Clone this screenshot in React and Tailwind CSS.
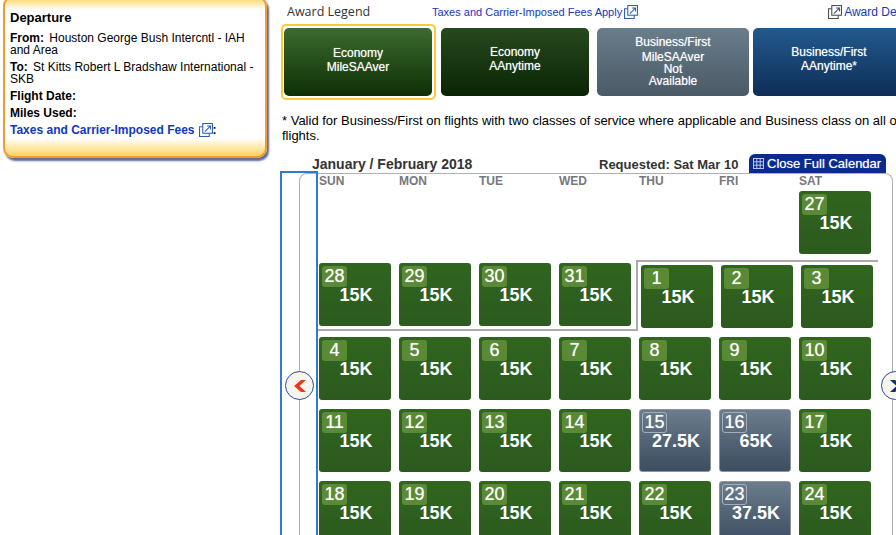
// Award calendar page: trip summary on the left, legend and month grid on the right
const ExternalIcon = ({ className = 'text-[#2f5fb8]' }) => (
  <svg width="14" height="14" viewBox="0 0 13 13" fill="none" stroke="currentColor" strokeWidth="1" className={className}>
    <path d="M3.5 3.5H0.5V12.5H9.5V9.5" />
    <rect x="3.5" y="0.5" width="9" height="9" />
    <path d="M5.5 8L10.5 3M7.5 2.8H10.7V6" />
  </svg>
);

const CalendarIcon = () => (
  <svg width="11" height="11" viewBox="0 0 11 11" fill="none" stroke="#b9c4ea" strokeWidth="1" className="shrink-0">
    <rect x="0.5" y="0.5" width="10" height="10" />
    <path d="M3.8 0.5V10.5M7.2 0.5V10.5M0.5 3.8H10.5M0.5 7.2H10.5" />
  </svg>
);

const NavButton = ({ className, color, d }) => (
  <button className={`absolute flex h-[29px] w-[29px] items-center justify-center rounded-full border border-[#2b4a9c] bg-[#f8f6ec] ${className}`}>
    <svg width="14" height="14" viewBox="0 0 14 14">
      <path d={d} fill={color} />
    </svg>
  </button>
);

const legend = [
  { lines: ['Economy', 'MileSAAver'], className: 'w-[148px] pb-[4px] bg-gradient-to-b from-[#3d6c2f] to-[#0e2f06]' },
  { lines: ['Economy', 'AAnytime'], className: 'ml-[5px] w-[148px] pb-[6px] bg-gradient-to-b from-[#28491f] to-[#0a2505]' },
  { lines: ['Business/First', 'MileSAAver', 'Not', 'Available'], tight: true, className: 'ml-[8px] w-[152px] pb-[2px] bg-gradient-to-b from-[#6a7d8b] to-[#4a5a66]' },
  { lines: ['Business/First', 'AAnytime*'], className: 'ml-[4px] w-[152px] shrink-0 pb-[6px] bg-gradient-to-b from-[#235a8e] to-[#0e2e57]' },
];

const days = ['SUN', 'MON', 'TUE', 'WED', 'THU', 'FRI', 'SAT'];

// null = empty slot, f = February cell of the shifted row, gray = business fare
const cells = [
  null, null, null, null, null, null, { d: 27, m: '15K' },
  { d: 28, m: '15K' }, { d: 29, m: '15K' }, { d: 30, m: '15K' }, { d: 31, m: '15K' },
  { d: 1, m: '15K', f: true }, { d: 2, m: '15K', f: true }, { d: 3, m: '15K', f: true },
  { d: 4, m: '15K' }, { d: 5, m: '15K' }, { d: 6, m: '15K' }, { d: 7, m: '15K' }, { d: 8, m: '15K' }, { d: 9, m: '15K' }, { d: 10, m: '15K' },
  { d: 11, m: '15K' }, { d: 12, m: '15K' }, { d: 13, m: '15K' }, { d: 14, m: '15K' },
  { d: 15, m: '27.5K', gray: true }, { d: 16, m: '65K', gray: true }, { d: 17, m: '15K' },
  { d: 18, m: '15K' }, { d: 19, m: '15K' }, { d: 20, m: '15K' }, { d: 21, m: '15K' }, { d: 22, m: '15K' },
  { d: 23, m: '37.5K', gray: true }, { d: 24, m: '15K' },
];

const DayCell = ({ cell }) => {
  if (!cell) return <div className="h-[63px] w-[72px]"></div>;
  return (
    <div
      className={`flex h-[63px] w-[72px] flex-col rounded-[3px] text-white ${cell.f ? 'ml-[2px] mt-[2px]' : ''} ${
        cell.gray
          ? 'border border-[#8b949c] bg-gradient-to-b from-[#6b7d8c] to-[#3d4d62] pl-[2px] pt-[2px]'
          : 'bg-gradient-to-b from-[#30651f] to-[#2c5a1e] pl-[3px] pt-[3px]'
      }`}>
      <div
        className={`flex h-[21px] w-[25px] items-center justify-center rounded-[3px] pb-[1px] text-[18px] leading-none [text-shadow:0_0_1px_rgba(255,255,255,0.6)] ${
          cell.gray ? 'border border-[#a4aeb8]' : 'bg-[#5a8a36]'
        }`}>
        {cell.d}
      </div>
      <div className={`-mt-[2px] text-center text-[18px] font-bold leading-[20px] ${cell.gray ? '-ml-[2px] pl-[2px]' : '-ml-[3px] pl-[2px]'}`}>{cell.m}</div>
    </div>
  );
};

export default function App() {
  return (
    <div className="relative flex h-[535px] w-[896px] overflow-hidden bg-white font-['Liberation_Sans',Arial,sans-serif] text-black">
      {/* Resumen del viaje */}
      <aside className="w-[280px] shrink-0 pl-[3px]">
        <div className="-mt-[4px] h-[162px] w-[264px] rounded-[10px] border-2 border-[#f29b30] bg-[linear-gradient(to_bottom,#ffd666_0,#ffffff_12px,#ffffff_calc(100%-18px),#ffd45e_100%)] pl-[5px] pr-[2px] pt-[13px] text-[12px] leading-[12px] shadow-[2px_3px_2px_#5f6d94]">
          <div className="mb-[7px] text-[13px] font-bold leading-[14px]">Departure</div>
          <div className="mb-[5px]">
            <b className="mr-[2px]">From:</b> Houston George Bush Intercntl - IAH and Area
          </div>
          <div className="mb-[5px]">
            <b className="mr-[2px]">To:</b> St Kitts Robert L Bradshaw International - SKB
          </div>
          <div className="mb-[5px] font-bold">Flight Date:</div>
          <div className="mb-[5px] font-bold">Miles Used:</div>
          <div className="flex h-[12px] items-center font-bold text-[#1238bd]">
            Taxes and Carrier-Imposed Fees
            <span className="ml-[4px]">
              <ExternalIcon />
            </span>
            <span className="text-black">:</span>
          </div>
        </div>
      </aside>

      <main className="w-[616px] shrink-0">
        {/* Leyenda */}
        <div className="flex h-[24px] w-[660px] items-center">
          <span className="ml-[7px] w-[145px] shrink-0 font-['Open_Sans',sans-serif] text-[12.5px] text-[#333]">Award Legend</span>
          <span className="flex shrink-0 items-center whitespace-nowrap text-[11px] text-[#1238bd]">
            Taxes and Carrier-Imposed Fees Apply
            <span className="ml-[2px]">
              <ExternalIcon />
            </span>
          </span>
          <span className="ml-[190px] flex shrink-0 items-center whitespace-nowrap text-[12px] text-[#1238bd]">
            <span className="mr-[2px]">
              <ExternalIcon className="text-[#4a4f58]" />
            </span>
            Award Details
          </span>
        </div>

        <div className="flex w-[640px] items-center pl-[1px]">
          <div className="shrink-0 rounded-[5px] border-2 border-[#fbc93c] py-[2px] pl-[1px] pr-[2px]">
            <LegendButton item={legend[0]} />
          </div>
          {legend.slice(1).map(item => (
            <LegendButton key={item.lines.join()} item={item} />
          ))}
        </div>

        <p className="mt-[13px] w-[640px] pl-[2px] text-[13px] leading-[15px]">
          * Valid for Business/First on flights with two classes of service where applicable and Business class on all other flights.
        </p>

        {/* Cabecera del calendario */}
        <div className="mt-[11px] flex h-[19px] items-end pl-[32px] pr-[10px]">
          <span className="mb-[1px] w-[287px] shrink-0 text-[14px] font-bold leading-[16px] text-[#333]">January / February 2018</span>
          <span className="mb-[1px] w-[150px] shrink-0 whitespace-nowrap text-[13px] font-bold leading-[15px] text-[#333]">Requested: Sat Mar 10</span>
          <button className="flex h-[19px] w-[137px] shrink-0 items-center gap-[3px] rounded-t-[6px] bg-[#0a2a8e] pl-[4px] text-[13px] leading-none text-white [text-shadow:0_0_1px_rgba(255,255,255,0.6)]">
            <CalendarIcon />
            <span className="whitespace-nowrap">Close Full Calendar</span>
          </button>
        </div>

        {/* Cuadrícula del mes */}
        <div className="relative ml-[19px] h-[400px] w-[594px] rounded-t-[8px] border border-b-0 border-[#b0b0b0] pl-[19px]">
          <div className="grid grid-cols-[repeat(7,72px)] gap-x-[8px]">
            {days.map(day => (
              <div key={day} className="h-[17px] text-[12px] font-bold leading-[14px] text-[#77777f]">
                {day}
              </div>
            ))}
          </div>
          <div className="relative grid grid-cols-[repeat(7,72px)] gap-x-[8px] gap-y-[9px]">
            {cells.map((cell, i) => (
              <DayCell key={i} cell={cell} />
            ))}
            <div className="absolute left-[317px] top-[69px] h-[71px] w-[242px] border-l-2 border-t-2 border-[#aaaaaa]"></div>
            <div className="absolute -left-[1px] top-[138px] h-[2px] w-[318px] bg-[#aaaaaa]"></div>
          </div>
          <NavButton className="-left-[15px] top-[197px]" color="#e8381f" d="M8 1L1 7L8 13H13L6.5 7L13 1Z" />
          <NavButton className="left-[581px] top-[197px]" color="#10306f" d="M6 1L13 7L6 13H1L7.5 7L1 1Z" />
        </div>
      </main>

      {/* Marco de foco sobre la flecha anterior */}
      <div className="absolute left-[280px] top-[171px] h-[400px] w-[38px] border-2 border-[#2f7bd0]"></div>
    </div>
  );
}

function LegendButton({ item }) {
  return (
    <button
      className={`flex h-[68px] flex-col items-center justify-center rounded-[5px] text-[12px] text-white [text-shadow:0_0_1px_rgba(255,255,255,0.6)] ${item.tight ? 'leading-[12px]' : 'leading-[14px]'} ${item.className}`}>
      {item.lines.map((line, i) => (
        <span key={line} className={item.tight && i === 0 ? 'mb-[3px]' : ''}>
          {line}
        </span>
      ))}
    </button>
  );
}
